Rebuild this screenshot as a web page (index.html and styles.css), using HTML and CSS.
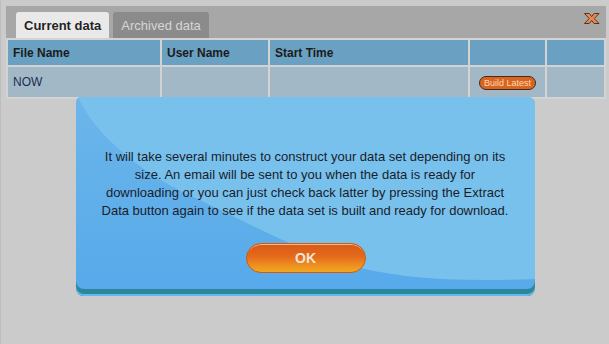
FILE: index.html
```html
<!DOCTYPE html>
<html>
<head>
<meta charset="utf-8">
<link rel="stylesheet" href="styles.css">
</head>
<body>
<div class="panel">
  <div class="tabbar">
    <div class="tabs">
      <div class="tab active">Current data</div>
      <div class="tab">Archived data</div>
    </div>
    <div class="close">
      <svg width="16" height="11" viewBox="0 0 16 11"><path d="M0.5 0.5 H5.3 L7.7 3.6 L10.1 0.5 H15 L10.2 5.5 L15 10.5 H10.1 L7.7 7.4 L5.3 10.5 H0.5 L5.2 5.5 Z" fill="#ef8a4e" stroke="#4f3424" stroke-width="1"/></svg>
    </div>
  </div>
  <table class="grid">
    <colgroup>
      <col class="c1"><col class="c2"><col class="c3"><col class="c4"><col class="c5">
    </colgroup>
    <tr class="head">
      <th>File Name</th><th>User Name</th><th>Start Time</th><th></th><th></th>
    </tr>
    <tr class="row">
      <td class="now">NOW</td><td></td><td></td><td class="btncell"><span class="build">Build Latest</span></td><td></td>
    </tr>
  </table>
</div>

<div class="modal">
  <svg class="sheen" width="459" height="199" viewBox="0 0 459 199"><path d="M2 0 C 20 40 70 80 124 103 C 180 130 230 158 284 171 C 340 184 400 184 459 182 L459 0 Z" fill="#79c1ed"/></svg>
  <p class="msg">It will take several minutes to construct your data set depending on its size. An email will be sent to you when the data is ready for downloading or you can just check back latter by pressing the Extract Data button again to see if the data set is built and ready for download.</p>
  <div class="ok">OK</div>
</div>
</body>
</html>
```

FILE: styles.css
```css
html, body {
  margin: 0;
  padding: 0;
}
body {
  width: 609px;
  height: 344px;
  background: #cbcbcb;
  border-left: 1px solid #bdbdbd;
  box-sizing: border-box;
  font-family: "Liberation Sans", Arial, sans-serif;
  position: relative;
  overflow: hidden;
}
.panel {
  padding: 6px 3px 0 5px;
}
.tabbar {
  height: 32px;
  background: #a7a7a7;
  display: flex;
  justify-content: space-between;
  align-items: flex-start;
  padding-left: 10px;
  box-sizing: border-box;
}
.tabs {
  display: flex;
  gap: 4px;
  padding-top: 6px;
}
.tab {
  height: 26px;
  line-height: 27px;
  padding: 0 8px 0 8px;
  font-size: 13px;
  color: #d6d6d6;
  background: #8b8b8b;
  border-radius: 3px 3px 0 0;
}
.tab.active {
  background: #e9e9e9;
  color: #222;
  font-weight: bold;
  text-shadow: 0 0 1px #fff;
}
.close {
  margin: 7px 6px 0 0;
  height: 11px;
}
.close svg {
  display: block;
}
.grid {
  width: 600px;
  border-spacing: 2px;
  background: #d3d3d3;
  table-layout: fixed;
}
.c1 { width: 152px; }
.c2 { width: 106px; }
.c3 { width: 198px; }
.c4 { width: 75px; }
.c5 { width: 57px; }
.grid th, .grid td {
  padding: 0 0 0 5px;
  text-align: left;
  font-size: 12px;
}
.head th {
  height: 25px;
  background: #6aa0c1;
  color: #1c1c1c;
  font-weight: bold;
}
.row td {
  height: 30px;
  background: #a2b8c7;
  color: #1d2b56;
}
.grid td.btncell {
  padding: 0;
  text-align: center;
}
.build {
  display: inline-block;
  width: 57px;
  height: 14px;
  box-sizing: border-box;
  line-height: 12px;
  font-size: 9px;
  color: #f7dcb8;
  background: #db641e;
  border: 1px solid #3e2e22;
  border-radius: 7px;
  text-align: center;
  vertical-align: middle;
  margin-top: 1px;
}
.modal {
  position: absolute;
  left: 75px;
  top: 97px;
  width: 459px;
  height: 199px;
  border-radius: 5px 7px 8px 8px;
  background: linear-gradient(#6cb6ea, #56a9ea);
  box-shadow: inset 0 -2px 0 #68b8ee, inset 0 -7px 0 #2b879a;
  overflow: hidden;
  text-align: center;
}
.sheen {
  position: absolute;
  left: 0;
  top: 0;
  display: block;
}
.msg {
  position: relative;
  margin: 0;
  padding: 51px 24px 0 23px;
  font-size: 13px;
  line-height: 18px;
  color: #1a1d2a;
}
.ok {
  position: relative;
  margin: 23px auto 0;
  width: 120px;
  height: 30px;
  box-sizing: border-box;
  border: 1px solid #cf5a12;
  border-radius: 15px;
  background: linear-gradient(#d85a16 0%, #e46a1c 45%, #ee9420 80%, #f2a81e 100%);
  box-shadow: inset 0 2px 0 -1px #f3b88e;
  color: #f1e4d6;
  font-weight: bold;
  font-size: 14px;
  line-height: 28px;
}
```
